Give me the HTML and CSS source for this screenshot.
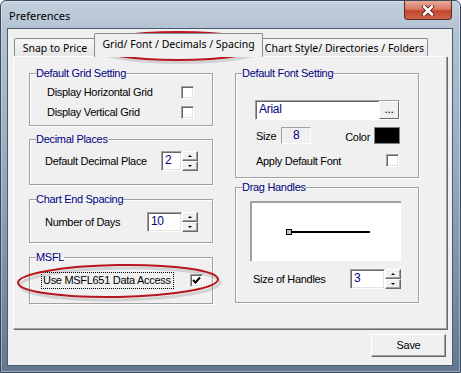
FILE: index.html
```html
<!DOCTYPE html>
<html lang="en">
<head>
<meta charset="UTF-8">
<title>Preferences</title>
<link rel="stylesheet" href="styles.css">
</head>
<body>

<div class="window">
    <div class="titlebar">
        <span class="title">Preferences</span>
        <div class="close">
            <svg width="14" height="11" viewBox="0 0 14 11">
                <path d="M3 1.5 L11 9.5 M11 1.5 L3 9.5" stroke="#5a2118" stroke-width="4.5" stroke-linecap="round"/>
                <path d="M3 1.5 L11 9.5 M11 1.5 L3 9.5" stroke="#fff" stroke-width="2.6" stroke-linecap="round"/>
            </svg>
        </div>
    </div>

    <div class="client">
        <div class="tabs">
            <div class="tab tab-snap">Snap to Price</div>
            <div class="tab tab-grid active">Grid/ Font / Decimals / Spacing</div>
            <div class="tab tab-chart">Chart Style/ Directories / Folders</div>
        </div>

        <div class="panel">
            <div class="col">
                <fieldset class="group g-grid">
                    <legend>Default Grid Setting</legend>
                    <div class="row row-grid"><span>Display Horizontal Grid</span><span class="check"></span></div>
                    <div class="row row-grid"><span>Display Vertical Grid</span><span class="check"></span></div>
                </fieldset>

                <fieldset class="group g-decimal">
                    <legend>Decimal Places</legend>
                    <div class="row row-spin">
                        <span class="grow">Default Decimal Place</span>
                        <span class="field field-small">2</span>
                        <span class="spin"><span class="spin-btn"><i class="up"></i></span><span class="spin-btn"><i class="down"></i></span></span>
                    </div>
                </fieldset>

                <fieldset class="group g-spacing">
                    <legend>Chart End Spacing</legend>
                    <div class="row row-spin">
                        <span class="grow">Number of Days</span>
                        <span class="field field-wide">10</span>
                        <span class="spin"><span class="spin-btn"><i class="up"></i></span><span class="spin-btn"><i class="down"></i></span></span>
                    </div>
                </fieldset>

                <fieldset class="group g-msfl">
                    <legend>MSFL</legend>
                    <div class="row row-msfl">
                        <span class="focus">Use MSFL651 Data Access</span>
                        <span class="check">
                            <svg width="11" height="11" viewBox="0 0 11 11"><path d="M2 5 L4.5 7.5 L9 2.5" fill="none" stroke="#000" stroke-width="2"/></svg>
                        </span>
                    </div>
                </fieldset>
            </div>

            <div class="col">
                <fieldset class="group g-font">
                    <legend>Default Font Setting</legend>
                    <div class="group-body font-body">
                        <div class="font-field">
                            <span class="grow">Arial</span>
                            <span class="dots">...</span>
                        </div>
                        <div class="size-row">
                            <span>Size</span>
                            <span class="size-box">8</span>
                            <span class="color-label">Color</span>
                            <span class="swatch"></span>
                        </div>
                        <div class="apply-row">
                            <span>Apply Default Font</span>
                            <span class="check"></span>
                        </div>
                    </div>
                </fieldset>

                <fieldset class="group g-drag">
                    <legend>Drag Handles</legend>
                    <div class="group-body drag-body">
                        <div class="preview">
                            <span class="handle"></span><span class="handle-line"></span>
                        </div>
                        <div class="row row-handles">
                            <span class="grow">Size of Handles</span>
                            <span class="field field-wide">3</span>
                            <span class="spin"><span class="spin-btn"><i class="up"></i></span><span class="spin-btn"><i class="down"></i></span></span>
                        </div>
                    </div>
                </fieldset>
            </div>
        </div>

        <div class="footer">
            <div class="button">Save</div>
        </div>
    </div>

    <!-- red marker ellipses drawn over the screenshot -->
    <svg class="marks" width="461" height="373" viewBox="0 0 461 373">
        <g fill="none">
            <ellipse cx="180" cy="48.5" rx="84" ry="14" stroke="rgba(0,0,0,0.12)" stroke-width="3"/>
            <ellipse cx="178" cy="46" rx="84" ry="14" stroke="#b8141c" stroke-width="2"/>
            <ellipse cx="120" cy="284" rx="100" ry="16" stroke="rgba(0,0,0,0.12)" stroke-width="3" transform="rotate(-1 120 284)"/>
            <ellipse cx="118" cy="281" rx="100" ry="16" stroke="#b8141c" stroke-width="2" transform="rotate(-1 118 281)"/>
        </g>
    </svg>
</div>

</body>
</html>
```

FILE: styles.css
```css
* {
    box-sizing: border-box;
}

body {
    margin: 0;
    font-family: "Liberation Sans", Arial, sans-serif;
    font-size: 11px;
    letter-spacing: -0.3px;
    color: #000;
    background: #fff;
}

/* window frame */
.window {
    position: relative;
    width: 461px;
    height: 373px;
    border: 1px solid #394a5d;
    border-radius: 6px 6px 0 0;
    padding: 0 7px 6px 6px;
    background: linear-gradient(to bottom, #c3d0dd 0px, #b2c2d2 30px, #94a7bb 180px, #62778f 373px);
    box-shadow: inset 0 0 0 1px rgba(255, 255, 255, 0.35);
    display: flex;
    flex-direction: column;
}

.titlebar {
    height: 27px;
    display: flex;
    justify-content: space-between;
    align-items: flex-start;
}

.title {
    font-family: "Noto Sans", "Open Sans", sans-serif;
    font-size: 11px;
    letter-spacing: 0;
    line-height: 16px;
    padding: 7px 0 0 2px;
}

.close {
    width: 48px;
    height: 19px;
    margin-right: 1px;
    border: 1px solid #5b2b24;
    border-top: 0;
    border-radius: 0 0 4px 4px;
    background: linear-gradient(to bottom, #e9ab9b 0%, #d77a64 45%, #c4452f 55%, #cf6148 100%);
    display: flex;
    align-items: center;
    justify-content: center;
}

.client {
    height: 338px;
    border: 1px solid #495b70;
    background: #f0f0f0;
}

/* tabs */
.tabs {
    display: flex;
    align-items: flex-end;
    height: 24px;
    margin: 4px 0 0 6px;
    position: relative;
    z-index: 1;
}

.tab {
    height: 18px;
    margin-bottom: 1px;
    border: 1px solid #898c95;
    border-bottom: 0;
    border-radius: 2px 2px 0 0;
    background: linear-gradient(to bottom, #f8f8f8, #e6e6e6);
    font-family: "Noto Sans", "Open Sans", sans-serif;
    font-size: 10.5px;
    letter-spacing: 0;
    line-height: 18px;
    text-align: center;
    white-space: nowrap;
}

.tab-snap {
    width: 82px;
}

.tab-grid {
    width: 169px;
    margin-left: -2px;
}

.tab-chart {
    width: 167px;
    margin-left: -2px;
}

.tab.active {
    height: 24px;
    margin-bottom: 0;
    background: #f0f0f0;
    line-height: 20px;
    z-index: 2;
    position: relative;
}

.panel {
    width: 434px;
    height: 273px;
    margin: -1px 0 0 5px;
    border: 1px solid;
    border-color: #fff #a0a0a0 #a0a0a0 #fff;
    box-shadow: 1px 1px 0 #696969;
    padding: 9px 0 0 15px;
    display: flex;
    gap: 22px;
}

.col {
    width: 184px;
    display: flex;
    flex-direction: column;
}

/* group boxes */
.group {
    margin: 0;
    padding: 0;
    border: 1px solid #a0a0a0;
    box-shadow: inset 1px 1px 0 #fff, 1px 1px 0 #fff;
    min-width: 0;
}

.group legend {
    color: #000080;
    line-height: 14px;
    padding: 0;
    margin-left: 6px;
}

.g-grid {
    height: 60px;
    padding-top: 2px;
}

.g-decimal {
    height: 53px;
    margin-top: 6px;
    padding-top: 5px;
}

.g-spacing {
    height: 51px;
    margin-top: 7px;
    padding-top: 6px;
}

.g-msfl {
    height: 54px;
    margin-top: 7px;
    padding-top: 8px;
}

.g-font {
    height: 112px;
}

.g-drag {
    height: 123px;
    margin-top: 2px;
}

.font-body {
    padding: 20px 18px 0 19px;
}

.drag-body {
    padding: 7px 17px 0 14px;
}

.row {
    display: flex;
    align-items: center;
}

.grow {
    flex: 1;
}

.row-grid {
    height: 20px;
    justify-content: space-between;
    padding: 0 18px 0 17px;
}

.row-spin {
    padding: 0 14px 0 15px;
}

.row-msfl {
    justify-content: space-between;
    padding: 0 9px 0 11px;
}

.row-handles {
    margin-top: 8px;
    padding-left: 3px;
}

.focus {
    border: 1px dotted #000;
    padding: 1px 2px 1px 1px;
    line-height: 13px;
}

/* controls */
.check {
    width: 13px;
    height: 13px;
    background: #fff;
    border: 1px solid;
    border-color: #a0a0a0 #fff #fff #a0a0a0;
    box-shadow: inset 1px 1px 0 #696969, inset -1px -1px 0 #e3e3e3;
    display: flex;
    align-items: center;
    justify-content: center;
}

.field {
    height: 20px;
    background: #fff;
    border: 1px solid;
    border-color: #a0a0a0 #fff #fff #a0a0a0;
    box-shadow: inset 1px 1px 0 #696969, inset -1px -1px 0 #e3e3e3;
    color: #000080;
    font-size: 12px;
    line-height: 17px;
    padding-left: 3px;
}

.field-small {
    width: 21px;
}

.field-wide {
    width: 35px;
}

.spin {
    width: 16px;
    display: flex;
    flex-direction: column;
}

.spin-btn {
    height: 10px;
    background: #f0f0f0;
    border: 1px solid;
    border-color: #fff #696969 #696969 #fff;
    box-shadow: inset -1px -1px 0 #a0a0a0;
    display: flex;
    align-items: center;
    justify-content: center;
}

.spin-btn i {
    width: 0;
    height: 0;
    border-left: 2px solid transparent;
    border-right: 2px solid transparent;
}

.spin-btn .up {
    border-bottom: 2px solid #000;
}

.spin-btn .down {
    border-top: 2px solid #000;
}

.font-field {
    height: 20px;
    display: flex;
    background: #fff;
    border: 1px solid;
    border-color: #a0a0a0 #fff #fff #a0a0a0;
    box-shadow: inset 1px 1px 0 #696969;
    color: #000080;
    font-size: 12px;
    line-height: 17px;
    padding-left: 3px;
}

.dots {
    width: 20px;
    background: #f0f0f0;
    border: 1px solid;
    border-color: #fff #696969 #696969 #fff;
    color: #000;
    text-align: center;
    line-height: 14px;
}

.size-row {
    display: flex;
    align-items: center;
    height: 17px;
    margin-top: 7px;
    padding-left: 1px;
}

.size-box {
    width: 30px;
    height: 17px;
    margin-left: 5px;
    border: 1px solid;
    border-color: #a0a0a0 #fff #fff #a0a0a0;
    color: #000080;
    font-size: 12px;
    line-height: 15px;
    text-align: center;
}

.color-label {
    margin-left: 34px;
    padding-top: 3px;
    flex: 1;
}

.swatch {
    width: 26px;
    height: 17px;
    background: #000;
    border: 1px solid #808080;
}

.apply-row {
    display: flex;
    justify-content: space-between;
    align-items: center;
    margin-top: 10px;
    padding: 0 1px 0 1px;
}

.preview {
    height: 60px;
    width: 151px;
    background: #fff;
    border-top: 2px solid #a0a0a0;
    border-left: 2px solid #a0a0a0;
    display: flex;
    align-items: center;
    padding: 0 0 0 34px;
}

.handle {
    width: 6px;
    height: 6px;
    background: #c0c0c0;
    border: 1px solid #000;
}

.handle-line {
    width: 78px;
    height: 2px;
    background: #000;
}

.footer {
    display: flex;
    justify-content: flex-end;
    padding: 5px 6px 0 0;
}

.button {
    width: 75px;
    height: 23px;
    background: #f0f0f0;
    border: 1px solid;
    border-color: #fff #696969 #696969 #fff;
    box-shadow: inset -1px -1px 0 #a0a0a0;
    text-align: center;
    line-height: 20px;
}

.marks {
    position: absolute;
    left: -1px;
    top: -1px;
    pointer-events: none;
}
```
